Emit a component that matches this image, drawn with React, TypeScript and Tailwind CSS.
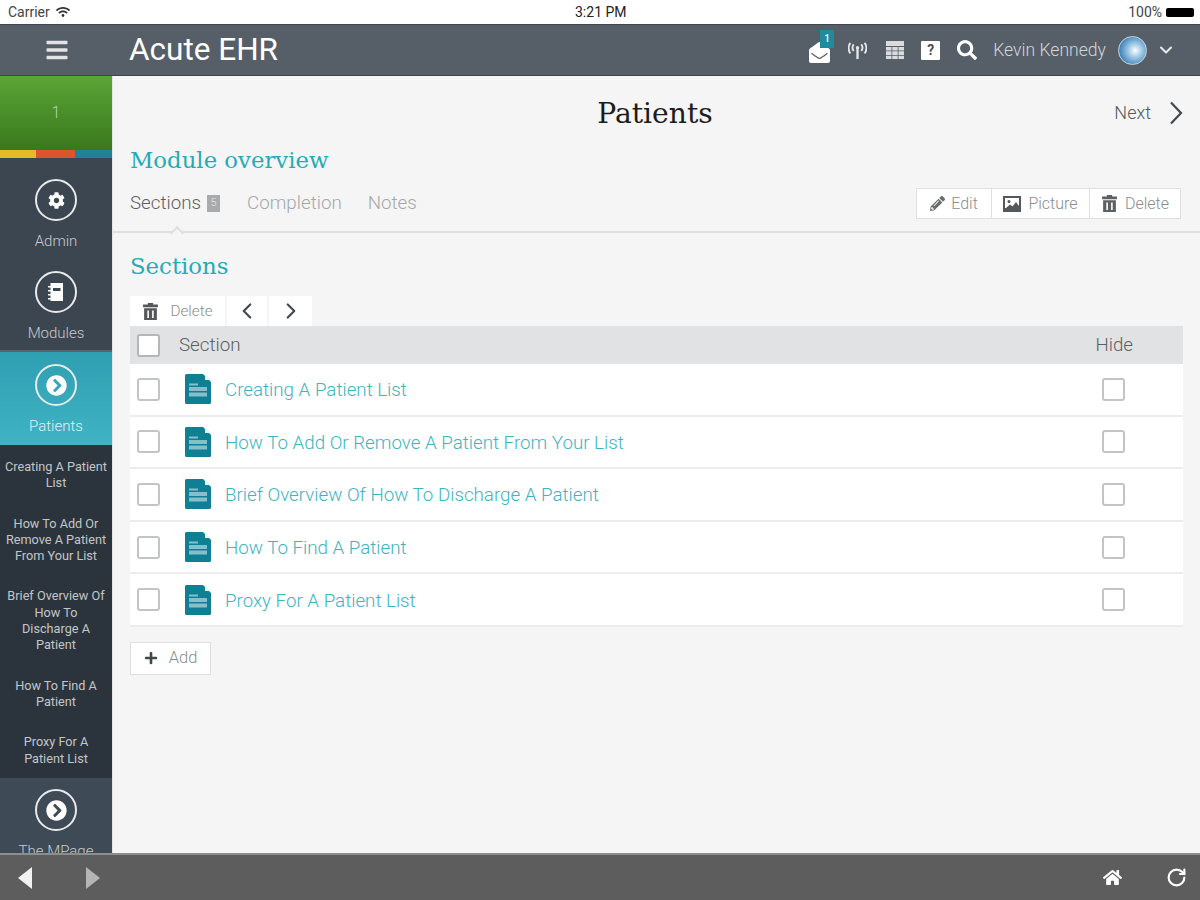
import { ChevronDown, ChevronLeft, ChevronRight, RotateCw } from "lucide-react";
import {
  FaBars,
  FaCog,
  FaChevronCircleRight,
  FaEnvelopeOpen,
  FaHome,
  FaPencilAlt,
  FaPlus,
  FaSearch,
  FaWifi,
} from "react-icons/fa";
import type { ReactNode } from "react";

const sections = [
  "Creating A Patient List",
  "How To Add Or Remove A Patient From Your List",
  "Brief Overview Of How To Discharge A Patient",
  "How To Find A Patient",
  "Proxy For A Patient List",
];

const slab = "font-['DejaVu_Serif',serif]";

function TrashIcon({ className }: { className?: string }) {
  return (
    <svg viewBox="0 0 16 16" className={className} fill="currentColor">
      <path d="M5.5 0h5v1.500H15V4H1V1.500h4.500z" />
      <path d="M2 5h12v11H2zM5 7v7h1.500V7zm4.500 0v7H11V7z" fillRule="evenodd" />
    </svg>
  );
}

function PictureIcon() {
  return (
    <svg viewBox="0 0 18 18" className="size-[18px]" fill="#55585b">
      <path d="M0 1h18v16H0zM2 3v10h14V3z" fillRule="evenodd" />
      <circle cx="6" cy="6.500" r="1.500" />
      <path d="M3 13l4-3.500 2.500 2L13 7l3 4v2z" />
    </svg>
  );
}

function DocIcon() {
  return (
    <svg viewBox="0 0 26 30" className="h-[30px] w-[26px] shrink-0">
      <path d="M1.500 0H18l8 8v20.500a1.500 1.500 0 0 1-1.500 1.500h-23A1.500 1.500 0 0 1 0 28.500v-27A1.500 1.500 0 0 1 1.500 0z" fill="#0f7f94" />
      <path d="M20 0l6 6h-6z" fill="#e8f3f5" />
      <path d="M4 9.500h9v2H4zM4 13h18v4H4zM4 18.500h18v4H4z" fill="#86bfcc" />
    </svg>
  );
}

function NotebookIcon() {
  return (
    <svg viewBox="0 0 16 18" className="h-[18px] w-4" fill="#fff">
      <path d="M2.500 0H15v18H2.500z" />
      <path d="M5 5h7.500v3H5z" fill="#3c4650" />
      <path d="M0 3h4v1.500H0zM0 7h4v1.500H0zM0 11h4v1.500H0zM0 15h4v1.500H0z" />
    </svg>
  );
}

function TowerIcon() {
  return (
    <svg viewBox="0 0 20 18" className="h-[17px] w-[19px]" fill="none" stroke="#e4e6e8" strokeWidth="2">
      <path d="M10 7v11" strokeWidth="2.500" />
      <circle cx="10" cy="6" r="1.800" fill="#e4e6e8" stroke="none" />
      <path d="M6 2.500c-1.500 2-1.500 5 0 7M14 2.500c1.500 2 1.500 5 0 7M2.500 1c-2.500 3-2.500 8 0 11M17.500 1c2.500 3 2.500 8 0 11" />
    </svg>
  );
}

function GridIcon() {
  return (
    <svg viewBox="0 0 18 18" className="h-[18px] w-[18px]" fill="#d9dbde">
      <path d="M0 0h18v5H0zM0 6h5.500v3.500H0zM6.300 6h5.400v3.500H6.300zM12.500 6H18v3.500h-5.500zM0 10.300h5.500V14H0zM6.300 10.300h5.400V14H6.300zM12.500 10.300H18V14h-5.500zM0 14.800h5.500V18H0zM6.300 14.800h5.400V18H6.300zM12.500 14.800H18V18h-5.500z" />
    </svg>
  );
}

function NavItem({ label, icon, active, h }: { label: string; icon: ReactNode; active?: boolean; h: string }) {
  return (
    <div
      className={`flex shrink-0 flex-col items-center pt-3 ${h} ${
        active ? "bg-gradient-to-b from-[#2f9fb2] to-[#3fb3c4] text-[#dff3f6]" : "text-[#c6cacd]"
      }`}
    >
      <div className="flex size-[42px] items-center justify-center rounded-full border-2 border-[#e8eaec] text-white">
        {icon}
      </div>
      <span className="mt-[10px] text-[15px] leading-5">{label}</span>
    </div>
  );
}

function ToolButton({ children, className }: { children: ReactNode; className?: string }) {
  return <div className={`flex items-center justify-center bg-white text-[#8a8d90] ${className ?? ""}`}>{children}</div>;
}

export default function App() {
  return (
    <div className="flex h-[900px] w-[1200px] flex-col overflow-hidden bg-[#f5f5f5] font-['Roboto',sans-serif] font-light">
      {/* status bar */}
      <div className="relative flex h-6 shrink-0 items-center justify-between bg-white pl-2 pr-[6px] text-[14px] font-normal text-[#444]">
        <div className="flex items-center gap-[6px]">
          <span>Carrier</span>
          <FaWifi className="size-[14px] text-[#333]" />
        </div>
        <span className="absolute left-[575px] text-[#222]">3:21 PM</span>
        <div className="flex items-center gap-1">
          <span>100%</span>
          <div className="h-[9px] w-[28px] rounded-[2px] bg-black" />
        </div>
      </div>

      {/* header */}
      <div className="flex h-[52px] shrink-0 items-center border-y border-[#3f454c] bg-[#565e68]">
        <div className="flex w-[113px] justify-center">
          <FaBars className="size-[24px] text-[#e2e4e6]" />
        </div>
        <span className="ml-[16px] text-[31.500px] font-normal leading-none text-white">Acute EHR</span>
        <div className="ml-auto flex items-center">
          <div className="relative mr-[18px] mt-1">
            <FaEnvelopeOpen className="size-[21px] text-white" />
            <span className="absolute -right-[4px] -top-[12px] flex h-[18px] w-[14px] items-center justify-center bg-[#1f8c9e] text-[10px] font-medium text-white">
              1
            </span>
          </div>
          <div className="mr-[19px]">
            <TowerIcon />
          </div>
          <div className="mr-[17px]">
            <GridIcon />
          </div>
          <div className="mr-[17px] flex h-[19px] w-[19px] items-center justify-center rounded-[1px] bg-white text-[14px] font-bold leading-none text-[#4a5058]">
            ?
          </div>
          <FaSearch className="mr-[16px] size-[20px] text-white" />
          <span className="mr-[12px] text-[17.600px] text-[#d3d6d9]">Kevin Kennedy</span>
          <div className="mr-[9px] size-[29px] rounded-full border border-[#c8d8e4] bg-[radial-gradient(circle_at_60%_50%,#ffffff_0%,#a4cde8_30%,#3f80b8_75%,#b8d0dc_100%)]" />
          <ChevronDown className="mr-[24px] size-[20px] text-[#e6e8ea]" strokeWidth={2.500} />
        </div>
      </div>

      <div className="flex min-h-0 flex-1">
        {/* sidebar */}
        <div className="flex w-[112px] shrink-0 flex-col overflow-hidden bg-[#3c4650] text-center">
          <div className="flex h-[74px] shrink-0 items-center justify-center bg-gradient-to-b from-[#5ba636] to-[#39781c] text-[16px] text-[#b6d4a8]">
            1
          </div>
          <div className="flex h-2 shrink-0">
            <div className="w-[36px] bg-[#e5bb2b]" />
            <div className="w-[39px] bg-[#d9562a]" />
            <div className="flex-1 bg-[#1f8296]" />
          </div>
          <div className="h-[9px] shrink-0" />
          <NavItem label="Admin" h="h-[92px]" icon={<FaCog className="size-[17px]" />} />
          <NavItem label="Modules" h="h-[93px] border-b-2 border-[#59626b]" icon={<NotebookIcon />} />
          <NavItem label="Patients" active h="h-[93px]" icon={<FaChevronCircleRight className="size-[21px]" />} />
          <div className="flex h-[333px] shrink-0 flex-col bg-[#2b343c] px-1 pt-[14px] text-[12.700px] font-normal leading-[16.300px] text-[#c3c6c9]">
            <p className="mb-[24px]">Creating A Patient List</p>
            <p className="mb-[24px]">How To Add Or Remove A Patient From Your List</p>
            <p className="mb-[24px] -mx-1">Brief Overview Of<br />How To<br />Discharge A<br />Patient</p>
            <p className="mb-[24px]">How To Find A Patient</p>
            <p className="mx-2">Proxy For A Patient List</p>
          </div>
          <NavItem label="The MPage" h="h-[92px] bg-[#3e4a56] !pt-[11px]" icon={<FaChevronCircleRight className="size-[21px]" />} />
        </div>

        {/* main */}
        <div className="relative min-w-0 flex-1 border-l border-[#e4e4e4] pt-[18px]">
          <div className="relative flex h-[38px] items-center justify-center pr-[3px] pt-[3px]">
            <h1 className={`${slab} text-[28.200px] font-normal leading-none text-[#1c1c1c]`}>Patients</h1>
            <div className="absolute right-[17px] top-[5px] flex items-center gap-[18px] text-[18px] text-[#55585b]">
              Next
              <svg viewBox="0 0 14 24" className="h-6 w-[14px]" fill="none" stroke="#45484b" strokeWidth="2.200">
                <path d="M2 1.500L12 12 2 22.500" />
              </svg>
            </div>
          </div>

          <h2 className={`${slab} ml-[17px] mt-[12px] text-[22.800px] font-normal leading-[32px] text-[#26aab8]`}>Module overview</h2>

          <div className="relative mt-[13px] flex h-[44px] items-start border-b-2 border-[#dcdedf] pl-[17px]">
            <div className="flex items-center text-[18.750px] leading-[28px] text-[#5d6063]">
              Sections
              <span className="ml-[6px] flex h-[17px] w-[13px] items-center justify-center bg-[#a8aaac] text-[11px] text-[#e8e8e8]">5</span>
            </div>
            <span className="ml-[27px] text-[18.750px] leading-[28px] text-[#a4a7aa]">Completion</span>
            <span className="ml-[26px] text-[18.750px] leading-[28px] text-[#a4a7aa]">Notes</span>
            <div className="absolute -bottom-[2px] left-[59px] size-[10px] translate-y-[5px] rotate-45 border-l-2 border-t-2 border-[#dcdedf] bg-[#f5f5f5]" />
            <div className="absolute right-[19px] top-[-1px] flex h-[31px] border border-[#dedfe0] bg-white text-[16px]">
              <ToolButton className="w-[75px] gap-[6px] border-r border-[#dedfe0]">
                <FaPencilAlt className="size-[15px] text-[#6a6c6f]" />
                Edit
              </ToolButton>
              <ToolButton className="w-[98px] gap-[7px] border-r border-[#dedfe0]">
                <PictureIcon />
                Picture
              </ToolButton>
              <ToolButton className="w-[90px] gap-[7px]">
                <TrashIcon className="size-[17px] text-[#5e6164]" />
                Delete
              </ToolButton>
            </div>
          </div>

          <h2 className={`${slab} ml-[17px] mt-[17px] text-[22.800px] font-normal leading-[32px] text-[#26aab8]`}>Sections</h2>

          <div className="ml-[17px] mr-[17px] mt-[14px]">
            <div className="flex h-[30px] gap-[2px]">
              <ToolButton className="w-[95px] gap-[11px] text-[15.300px]">
                <TrashIcon className="size-[17px] text-[#55585b]" />
                Delete
              </ToolButton>
              <ToolButton className="w-[40px]">
                <ChevronLeft className="size-[26px] text-[#45484b]" strokeWidth={2} />
              </ToolButton>
              <ToolButton className="w-[43px]">
                <ChevronRight className="size-[26px] text-[#45484b]" strokeWidth={2} />
              </ToolButton>
            </div>

            <div className="flex h-[38px] items-center bg-[#e1e2e3] pl-[7px] pr-[50px] text-[18.750px] text-[#5d6063]">
              <div className="size-[23px] rounded-[3px] border-2 border-[#b4b6b8] bg-white" />
              <span className="ml-[19px]">Section</span>
              <span className="ml-auto">Hide</span>
            </div>

            {sections.map((s) => (
              <div key={s} className="flex h-[52.600px] items-center border-b-2 border-[#ececec] bg-white pl-[7px] pr-[58px]">
                <div className="size-[23px] rounded-[3px] border-2 border-[#c2c4c6] bg-white" />
                <div className="ml-[25px]">
                  <DocIcon />
                </div>
                <span className="ml-[14px] mt-[2px] text-[18.750px] text-[#3db4c2]">{s}</span>
                <div className="ml-auto size-[23px] rounded-[3px] border-2 border-[#c2c4c6] bg-white" />
              </div>
            ))}

            <ToolButton className="mt-[15px] h-[33px] w-[81px] gap-[11px] border border-[#dedfe0] text-[16.500px]">
              <FaPlus className="size-[14px] text-[#45484b]" />
              Add
            </ToolButton>
          </div>
        </div>
      </div>

      {/* bottom bar */}
      <div className="z-10 flex h-[47px] shrink-0 items-center border-t-2 border-[#8d8d8d] bg-[#5d5d5d] pl-[18px] pr-[13px]">
        <svg viewBox="0 0 14 22" className="h-[22px] w-[14px]" fill="#f2f2f2"><path d="M14 0v22L0 11z" /></svg>
        <svg viewBox="0 0 14 22" className="ml-[54px] h-[22px] w-[14px]" fill="#b5b5b5"><path d="M0 0v22l14-11z" /></svg>
        <FaHome className="ml-auto mr-[44px] size-[19px] text-white" />
        <RotateCw className="size-[21px] text-white" strokeWidth={2.500} />
      </div>
    </div>
  );
}
